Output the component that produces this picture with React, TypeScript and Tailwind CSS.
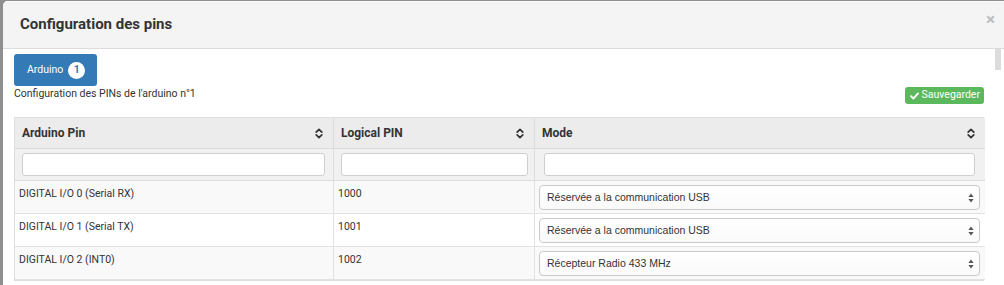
import React from "react";

function SortIcon() {
  return (
    <svg width="8" height="11" viewBox="0 0 8 11" fill="none">
      <path d="M1.2 4.2 L4 1.4 L6.8 4.2" stroke="#333" strokeWidth="1.7" strokeLinecap="round" strokeLinejoin="round" />
      <path d="M1.2 6.8 L4 9.6 L6.8 6.8" stroke="#333" strokeWidth="1.7" strokeLinecap="round" strokeLinejoin="round" />
    </svg>
  );
}

function SelectArrows() {
  return (
    <svg width="6" height="10" viewBox="0 0 6 10">
      <path d="M3 0.5 L5.6 4 L0.4 4 Z" fill="#555" />
      <path d="M3 9.5 L5.6 6 L0.4 6 Z" fill="#555" />
    </svg>
  );
}

function Select({ label }: { label: string }) {
  return (
    <div className="h-[25px] w-full rounded-[4px] border border-[#c9c9c9] bg-gradient-to-b from-white to-[#fafafa] flex items-center justify-between pl-[7px] pr-[5px] font-['Liberation_Sans',Arial,sans-serif] text-[10.5px] text-[#333]">
      <span>{label}</span>
      <SelectArrows />
    </div>
  );
}

const rows = [
  { pin: "DIGITAL I/O 0 (Serial RX)", logical: "1000", mode: "Réservée a la communication USB" },
  { pin: "DIGITAL I/O 1 (Serial TX)", logical: "1001", mode: "Réservée a la communication USB" },
  { pin: "DIGITAL I/O 2 (INT0)", logical: "1002", mode: "Récepteur Radio 433 MHz" },
];

export default function App() {
  return (
    <div className="w-[1004px] h-[285px] overflow-hidden bg-[#8f8f8f] font-[Roboto,sans-serif] text-[#333]">
      <div className="ml-[3px] mt-[1px] w-[1001px] h-[300px] bg-white rounded-tl-[5px] overflow-hidden">
        {/* Header */}
        <div className="h-[48px] shrink-0 bg-[#f4f4f4] border-t border-t-[#fbfbfb] border-b border-b-[#dcdcdc] flex items-center justify-between pl-[17px] pr-[9px]">
          <h4 className="text-[15px] font-bold text-[#333] leading-[18px] mt-[-2px]">Configuration des pins</h4>
          <span className="text-[17px] font-bold text-[#bdbdbd] leading-none mt-[-12px]">×</span>
        </div>
        {/* Body */}
        <div className="flex">
          <div className="flex-1 pl-[11px] pr-[11px]">
            <div className="pt-[5px]">
              <button className="h-[32px] w-[83px] bg-[#337ab7] rounded-[3px] flex items-center pl-[13px] gap-[5px] text-white text-[10.5px]">
                <span>Arduino</span>
                <span className="w-[17px] h-[17px] rounded-full bg-white text-[#337ab7] font-bold text-[10.5px] flex items-center justify-center leading-none">1</span>
              </button>
            </div>
            <div className="flex items-start justify-between">
              <div className="text-[10.5px] leading-[14px] pt-[1px]">Configuration des PINs de l'arduino n°1</div>
              <button className="mt-[1px] h-[17px] bg-[#5cb85c] rounded-[3px] flex items-center pl-[5px] pr-[4px] gap-[3px] text-white text-[10.5px] leading-none whitespace-nowrap">
                <svg width="9" height="8" viewBox="0 0 9 8" fill="none">
                  <path d="M1 4.2 L3.4 6.6 L8 1.4" stroke="white" strokeWidth="1.9" strokeLinecap="round" strokeLinejoin="round" />
                </svg>
                <span>Sauvegarder</span>
              </button>
            </div>
            {/* Table */}
            <div className="mt-[13px] w-[970px] border border-[#dedede] grid grid-cols-[319px_201px_450px]">
              {["Arduino Pin", "Logical PIN", "Mode"].map((h, i) => (
                <div
                  key={h}
                  className={`h-[31px] bg-[#ececec] border-b border-[#dcdcdc] flex items-center justify-between pl-[7px] pr-[10px] text-[12px] font-bold ${i < 2 ? "border-r" : ""}`}
                >
                  <span>{h}</span>
                  <SortIcon />
                </div>
              ))}
              <div className="h-[32px] bg-[#f1f1f1] border-b border-r border-[#dcdcdc] pl-[7px] pr-[8px] pt-[4px]">
                <div className="h-[23px] bg-white border border-[#cfcfcf] rounded-[3px]" />
              </div>
              <div className="h-[32px] bg-[#f1f1f1] border-b border-r border-[#dcdcdc] pl-[7px] pr-[6px] pt-[4px]">
                <div className="h-[23px] bg-white border border-[#cfcfcf] rounded-[3px]" />
              </div>
              <div className="h-[32px] bg-[#f1f1f1] border-b border-[#dcdcdc] pl-[9px] pr-[10px] pt-[4px]">
                <div className="h-[23px] bg-white border border-[#cfcfcf] rounded-[3px]" />
              </div>
              {rows.map((r, i) => {
                const bg = i % 2 === 0 ? "bg-[#f9f9f9]" : "bg-white";
                return (
                  <React.Fragment key={r.pin}>
                    <div className={`h-[33px] ${bg} border-b border-r border-[#e2e2e2] pl-[4px] pt-[6px] text-[10.5px] leading-[14px]`}>{r.pin}</div>
                    <div className={`h-[33px] ${bg} border-b border-r border-[#e2e2e2] pl-[4px] pt-[6px] text-[10.5px] leading-[14px]`}>{r.logical}</div>
                    <div className={`h-[33px] ${bg} border-b border-[#e2e2e2] pl-[4px] pr-[5px] pt-[4px]`}>
                      <Select label={r.mode} />
                    </div>
                  </React.Fragment>
                );
              })}
            </div>
          </div>
          <div className="w-[6px]">
            <div className="h-[21px] bg-[#dcdcdc]" />
          </div>
          <div className="w-[3px]" />
        </div>
      </div>
    </div>
  );
}
